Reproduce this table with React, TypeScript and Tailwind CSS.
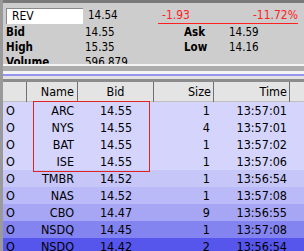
import React from 'react';

interface Quote {
  side: string;
  name: string;
  bid: string;
  size: string;
  time: string;
  bg: string;
}

const rows: Quote[] = [
  { side: 'O', name: 'ARC', bid: '14.55', size: '1', time: '13:57:01', bg: 'bg-[#d4d4fc]' },
  { side: 'O', name: 'NYS', bid: '14.55', size: '4', time: '13:57:01', bg: 'bg-[#d4d4fc]' },
  { side: 'O', name: 'BAT', bid: '14.55', size: '1', time: '13:57:02', bg: 'bg-[#d4d4fc]' },
  { side: 'O', name: 'ISE', bid: '14.55', size: '1', time: '13:57:06', bg: 'bg-[#d4d4fc]' },
  { side: 'O', name: 'TMBR', bid: '14.52', size: '1', time: '13:56:54', bg: 'bg-[#c6c6f8]' },
  { side: 'O', name: 'NAS', bid: '14.52', size: '1', time: '13:57:08', bg: 'bg-[#babaf8]' },
  { side: 'O', name: 'CBO', bid: '14.47', size: '9', time: '13:56:55', bg: 'bg-[#a6a6f4]' },
  { side: 'O', name: 'NSDQ', bid: '14.45', size: '1', time: '13:57:08', bg: 'bg-[#8484f0]' },
  { side: 'O', name: 'NSDQ', bid: '14.42', size: '2', time: '13:56:54', bg: 'bg-[#5656ec]' },
];

const cols = 'grid grid-cols-[24px_51px_76px_60px_76px_1fr]';

export default function App() {
  return (
    <div className="w-[304px] h-[251px] overflow-hidden bg-[#c8c8c8] font-['DejaVu_Sans_Condensed','DejaVu_Sans',sans-serif] text-black border-l-[3px] border-[#9a9a9a]">
      {/* top bar */}
      <div className="h-[3px] bg-[#7a7a7a]" />

      {/* quote panel */}
      <div className="h-[61px] bg-[#cdcdcd] overflow-hidden pt-[4px] text-[11.5px] leading-[15px]">
        <div className="flex items-center h-[17px]">
          <div className="ml-[3px] w-[77px] shrink-0 h-[16px] bg-white border-t border-l border-[#8a8a8a] pl-[5px] text-[12px] leading-[15px]">
            REV
          </div>
          <span className="ml-[5px] w-[70px] shrink-0">14.54</span>
          <div className="flex justify-between w-[140px] shrink-0 border-b border-[#ff2020] text-[#ff2020] text-[12px] leading-[15px] pl-[4px] self-start mt-[1px]">
            <span>-1.93</span>
            <span>-11.72%</span>
          </div>
        </div>
        <div className="flex h-[15px] mt-[1px]">
          <span className="ml-[3px] w-[79px] font-bold">Bid</span>
          <span className="w-[99px]">14.55</span>
          <span className="w-[45px] font-bold">Ask</span>
          <span>14.59</span>
        </div>
        <div className="flex h-[15px]">
          <span className="ml-[3px] w-[79px] font-bold">High</span>
          <span className="w-[99px]">15.35</span>
          <span className="w-[45px] font-bold">Low</span>
          <span>14.16</span>
        </div>
        <div className="flex h-[15px]">
          <span className="ml-[3px] w-[79px] font-bold">Volume</span>
          <span>596,879</span>
        </div>
      </div>

      {/* splitter */}
      <div className="h-[2px] bg-[#f4f4f4]" />
      <div className="h-[5px] bg-[#acacac]" />
      <div className="h-[3px] bg-[#f4f4f4]" />
      <div className="h-[2px] bg-[#9494ee]" />
      <div className="h-[3px] bg-[#e2e2e2]" />
      <div className="h-[3px] bg-[#8c8c8c]" />

      {/* book */}
      <div className="relative text-[12.5px]">
        <div className={`${cols} h-[20px] bg-[#e4e4e4] leading-[20px] border-b border-[#c0c0c0]`}>
          <div className="border-r border-[#707070]" />
          <div className="border-r border-[#707070] text-right pr-[3px]">Name</div>
          <div className="border-r border-[#707070] text-center">Bid</div>
          <div className="border-r border-[#707070] text-right pr-[2px]">Size</div>
          <div className="border-r border-[#707070] text-right pr-[2px]">Time</div>
          <div />
        </div>
        {rows.map((r, i) => (
          <div key={i} className={`${cols} h-[17px] leading-[17px] ${r.bg}`}>
            <div className="pl-[3px]">{r.side}</div>
            <div className="text-right pr-[4px]">{r.name}</div>
            <div className="text-center">{r.bid}</div>
            <div className="text-right pr-[4px]">{r.size}</div>
            <div className="text-right pr-[3px]">{r.time}</div>
            <div />
          </div>
        ))}
        <div className="absolute left-[30px] top-[19px] w-[117px] h-[71px] border border-[#e02424]" />
      </div>
    </div>
  );
}
